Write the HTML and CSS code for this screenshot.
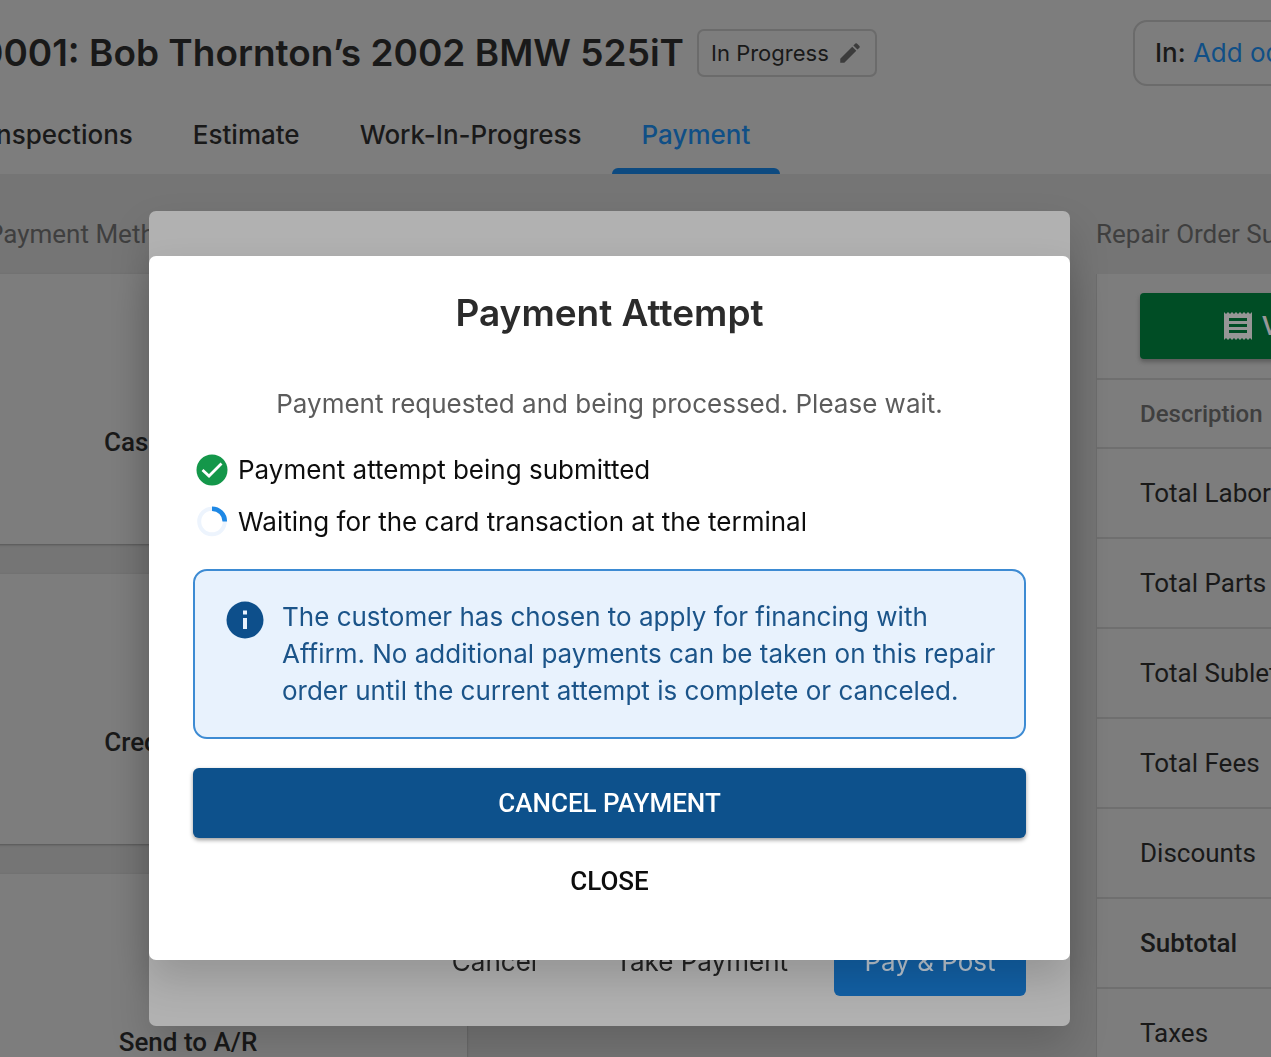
FILE: index.html
```html
<!DOCTYPE html>
<html lang="en">
<head>
<meta charset="utf-8">
<meta name="viewport" content="width=device-width, initial-scale=1">
<title>Payment Attempt</title>
<link rel="stylesheet" href="styles.css">
</head>
<body>
<div class="app">
  <header class="header">
    <div class="title-row">
      <h1 class="title">0001: Bob Thornton’s 2002 BMW 525iT</h1>
      <button class="status" type="button">In Progress
        <svg class="status-icon" viewBox="0 0 24 24" aria-hidden="true"><path d="M3 17.25V21h3.75L17.81 9.94l-3.75-3.75L3 17.25zM20.71 7.04a1 1 0 0 0 0-1.41l-2.34-2.34a1 1 0 0 0-1.41 0l-1.83 1.83 3.75 3.75 1.83-1.83z"/></svg>
      </button>
      <div class="odometer"><span class="odometer-label">In:</span> <a href="#odometer">Add odometer</a></div>
    </div>
    <nav class="tabs">
      <a class="tab" href="#inspections">Inspections</a>
      <a class="tab" href="#estimate">Estimate</a>
      <a class="tab" href="#wip">Work-In-Progress</a>
      <a class="tab tab-active" href="#payment">Payment</a>
    </nav>
  </header>
  <main class="content">
    <section class="methods">
      <h2 class="section-title methods-title">Payment Method</h2>
      <div class="method-list">
        <button class="method" type="button"><span class="method-name">Cash Payment</span></button>
        <button class="method" type="button"><span class="method-name">Credit or Debit</span></button>
        <button class="method" type="button"><span class="method-name">Send to A/R</span></button>
      </div>
    </section>
    <section class="summary">
      <h2 class="section-title">Repair Order Summary</h2>
      <div class="panel">
        <div class="panel-actions">
          <button class="view" type="button">
            <svg class="view-icon" viewBox="0 0 28 28" aria-hidden="true"><path fill-rule="evenodd" d="M0 0l2 2 2-2 2 2 2-2 2 2 2-2 2 2 2-2 2 2 2-2 2 2 2-2 2 2 2-2v28l-2-2-2 2-2-2-2 2-2-2-2 2-2-2-2 2-2-2-2 2-2-2-2 2-2-2-2 2zM5 6v3h18V6zm0 6v3h18v-3zm0 6v3h18v-3z"/></svg>
            View Invoice
          </button>
        </div>
        <table class="totals">
          <thead><tr><th scope="col">Description</th></tr></thead>
          <tbody>
            <tr><td>Total Labor</td></tr>
            <tr><td>Total Parts</td></tr>
            <tr><td>Total Sublet</td></tr>
            <tr><td>Total Fees</td></tr>
            <tr><td>Discounts</td></tr>
            <tr class="subtotal"><td>Subtotal</td></tr>
            <tr><td>Taxes</td></tr>
          </tbody>
        </table>
      </div>
    </section>
  </main>
</div>

<div class="overlay overlay-back">
  <div class="take-payment">
    <button class="text-button" type="button">Cancel</button>
    <button class="text-button" type="button">Take Payment</button>
    <button class="post-button" type="button">Pay &amp; Post</button>
  </div>
</div>

<div class="overlay overlay-front">
  <div class="dialog" role="dialog" aria-modal="true" aria-labelledby="dialog-title">
    <h2 class="dialog-title" id="dialog-title">Payment Attempt</h2>
    <p class="dialog-text">Payment requested and being processed. Please wait.</p>
    <ul class="steps">
      <li class="step">
        <svg class="step-icon" viewBox="0 0 32 32" aria-hidden="true"><circle cx="16" cy="16" r="15.5" fill="#14974a"/><path d="M6.500 16l6.500 6 12.500-12.500" fill="none" stroke="#fff" stroke-width="2.800"/></svg>
        Payment attempt being submitted
      </li>
      <li class="step">
        <svg class="step-icon" viewBox="0 0 32 32" aria-hidden="true"><circle cx="16" cy="15.500" r="12.800" fill="none" stroke="#edf4fd" stroke-width="4"/><path d="M16 2.700A12.800 12.800 0 0 1 28.800 15.500" fill="none" stroke="#1e88e5" stroke-width="4.600"/></svg>
        Waiting for the card transaction at the terminal
      </li>
    </ul>
    <div class="notice">
      <svg class="notice-icon" viewBox="0 0 38 38" aria-hidden="true"><circle cx="19" cy="19" r="18.500" fill="#0d4f8b"/><path d="M17 9.500h4v4h-4zM17 17h4v11h-4z" fill="#e8f2fd"/></svg>
      <p class="notice-text">The customer has chosen to apply for financing with Affirm. No additional payments can be taken on this repair order until the current attempt is complete or canceled.</p>
    </div>
    <button class="cancel-button" type="button">CANCEL PAYMENT</button>
    <button class="close-button" type="button">CLOSE</button>
  </div>
</div>
</body>
</html>
```
FILE: styles.css
```css
* { box-sizing: border-box; }

body {
  margin: 0;
  height: 100vh;
  overflow: hidden;
  background: #757575;
  color: #191919;
  font-family: Roboto, sans-serif;
  font-size: 26px;
}

h1, h2, p, ul { margin: 0; padding: 0; }
button { margin: 0; border: 0; background: none; color: inherit; font: inherit; }
a { color: #104f86; text-decoration: none; }
svg { flex: none; }

.app { height: 100vh; margin-left: -91px; overflow: hidden; }

.header {
  padding-top: 20px;
  background: #7d7d7d;
  font-family: Inter, sans-serif;
}

.title-row {
  display: flex;
  align-items: center;
  height: 66px;
  padding-left: 70px;
  white-space: nowrap;
}

.title { font-size: 37px; line-height: 48px; font-weight: 600; }

.status {
  display: flex;
  align-items: center;
  gap: 8px;
  height: 48px;
  margin-left: 13px;
  padding: 0 12px;
  border: 2px solid #6b6b6b;
  border-radius: 7px;
  font-size: 22px;
}
.status-icon { width: 26px; height: 26px; fill: #3c3c3c; }

.odometer {
  width: 300px;
  height: 66px;
  margin-left: auto;
  margin-right: -162px;
  padding-left: 20px;
  border: 2px solid #6b6b6b;
  border-radius: 14px;
  line-height: 62px;
}
.odometer-label { font-weight: 500; }

.tabs { display: flex; height: 88px; padding-left: 50px; }
.tab {
  padding: 32px 30px 0;
  color: #191919;
  font-size: 26px;
  line-height: 34px;
  font-weight: 500;
}
.tab-active { color: #104f86; }
.tab-active::after {
  content: "";
  display: block;
  height: 6px;
  margin: 16px -30px 0;
  border-radius: 6px 6px 0 0;
  background: #0d4a80;
}

.content {
  display: grid;
  grid-template-columns: 558px 400px;
  justify-content: space-between;
  margin-right: -225px;
  padding-top: 40px;
}

.section-title {
  height: 60px;
  color: #3f3f3f;
  font-size: 26px;
  line-height: 40px;
  font-weight: 400;
}
.methods-title { padding-left: 78px; }

.method-list { display: grid; gap: 30px; }
.method {
  display: flex;
  justify-content: center;
  height: 270px;
  padding: 152px 0 0;
  background: #7d7d7d;
  box-shadow: 0 1px 2px #555;
  font-weight: 500;
  line-height: 32px;
}

.panel {
  border-left: 1px solid #6d6d6d;
  background: #7d7d7d;
}
.panel-actions { padding: 19px 43px; }
.view {
  display: flex;
  align-items: center;
  gap: 10px;
  width: 100%;
  height: 66px;
  padding-left: 84px;
  border-radius: 4px;
  background: #004d25;
  color: #989898;
  font-weight: 500;
  box-shadow: 0 3px 4px #5c5c5c;
}
.view-icon { width: 28px; height: 28px; fill: #969696; }

.totals { width: 100%; border-spacing: 0; }
.totals th, .totals td {
  height: 90px;
  padding: 0 43px;
  border-top: 2px solid #6f6f6f;
  text-align: left;
}
.totals th { height: 69px; color: #3f3f3f; font-size: 24px; font-weight: 500; }
.totals .subtotal td { font-weight: 500; }

.overlay { position: fixed; inset: 0; padding: 0 201px 0 149px; }
.overlay-back { padding-top: 211px; padding-bottom: 31px; }
.overlay-front { padding-top: 256px; }

.take-payment {
  display: flex;
  align-items: flex-end;
  justify-content: flex-end;
  gap: 14px;
  height: 100%;
  padding: 30px 44px;
  border-radius: 7px;
  background: #b1b1b1;
  box-shadow: 0 20px 40px rgba(0, 0, 0, .16);
  font-family: Inter, sans-serif;
  color: #222;
}
.text-button { height: 70px; padding: 0 32px; }
.post-button {
  width: 192px;
  height: 70px;
  border-radius: 6px;
  background: #1260a5;
  color: #b9c4cf;
}

.dialog {
  display: flex;
  flex-direction: column;
  padding: 32px 44px 44px;
  border-radius: 7px;
  background: #fff;
  box-shadow: 0 20px 40px rgba(0, 0, 0, .16);
  color: #0d0d0d;
  font-family: Inter, sans-serif;
}
.dialog-title {
  color: #2b2b2b;
  font-size: 37px;
  line-height: 50px;
  font-weight: 600;
  text-align: center;
}
.dialog-text {
  margin-top: 46px;
  color: #5c5c5c;
  line-height: 40px;
  text-align: center;
}
.steps { display: grid; gap: 12px; margin-top: 26px; list-style: none; }
.step { display: flex; align-items: center; gap: 10px; padding-left: 3px; line-height: 40px; }
.step-icon { width: 32px; height: 32px; }

.notice {
  display: flex;
  gap: 18px;
  margin-top: 27px;
  padding: 27px 20px 28px 31px;
  border: 2px solid #3d8bd3;
  border-radius: 14px;
  background: #e8f2fd;
  color: #1b5489;
}
.notice-icon { width: 38px; height: 38px; margin-top: 3px; }
.notice-text { line-height: 37px; }

.cancel-button {
  height: 70px;
  margin-top: 29px;
  border-radius: 6px;
  background: #0d518c;
  color: #fff;
  font-family: Roboto, sans-serif;
  font-weight: 500;
  box-shadow: 0 2px 4px rgba(0, 0, 0, .4);
}
.close-button {
  height: 70px;
  margin-top: 8px;
  font-family: Roboto, sans-serif;
  font-weight: 500;
}
```
